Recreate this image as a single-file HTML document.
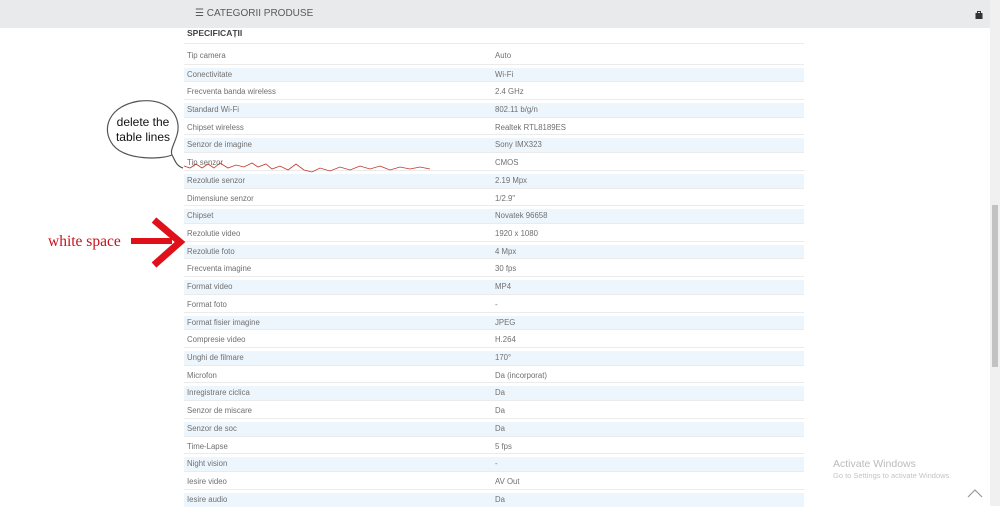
<!DOCTYPE html>
<html><head><meta charset="utf-8"><style>
*{margin:0;padding:0;box-sizing:border-box}
body{width:1000px;height:506px;overflow:hidden;background:#fff;font-family:"Liberation Sans",sans-serif;position:relative}
.hdr{position:absolute;left:0;top:0;width:990px;height:28px;background:#e8eaeb;z-index:5}
.hdr .t{position:absolute;left:195px;top:8px;font-size:10px;color:#5a5a5a}
.sb{position:absolute;left:990px;top:0;width:10px;height:506px;background:#f0f0f0}
.thumb{position:absolute;left:992px;top:205px;width:6px;height:162px;background:#c2c2c2}
h3{position:absolute;left:187px;top:28px;font-size:8.5px;font-weight:bold;color:#444}
.row{position:absolute;left:184px;width:620px;height:18px;border-top:1px solid #ebebeb;font-size:7.8px;color:#707070}
.b{background:linear-gradient(#fff 0,#fff 3px,#eef6fd 3px)}
.k{position:absolute;left:3px;top:5px}.v{position:absolute;left:311px;top:5px}
.aw{position:absolute;left:833px;top:458px;color:#bbb;font-size:10.5px}
.aw2{position:absolute;left:833px;top:471px;color:#c4c4c4;font-size:7.5px}
</style></head><body>
<div class="hdr"><div class="t">&#9776; CATEGORII PRODUSE</div>
<svg style="position:absolute;left:975px;top:11px" width="8" height="8"><rect x="0.5" y="2" width="7" height="6" fill="#333"/><rect x="2.5" y="0.5" width="3" height="2.5" fill="none" stroke="#333"/></svg></div>
<div class="sb"></div><div class="thumb"></div>
<h3>SPECIFICAȚII</h3>
<div class="row" style="top:42.5px;height:21px"><span class="k" style="top:7px">Tip camera</span><span class="v" style="top:7px">Auto</span></div>
<div class="row b" style="top:63.5px"><span class="k">Conectivitate</span><span class="v">Wi-Fi</span></div>
<div class="row" style="top:81.2px"><span class="k">Frecventa banda wireless</span><span class="v">2.4 GHz</span></div>
<div class="row b" style="top:98.9px"><span class="k">Standard Wi-Fi</span><span class="v">802.11 b/g/n</span></div>
<div class="row" style="top:116.6px"><span class="k">Chipset wireless</span><span class="v">Realtek RTL8189ES</span></div>
<div class="row b" style="top:134.4px"><span class="k">Senzor de imagine</span><span class="v">Sony IMX323</span></div>
<div class="row" style="top:152.1px"><span class="k">Tip senzor</span><span class="v">CMOS</span></div>
<div class="row b" style="top:169.8px"><span class="k">Rezolutie senzor</span><span class="v">2.19 Mpx</span></div>
<div class="row" style="top:187.5px"><span class="k">Dimensiune senzor</span><span class="v">1/2.9"</span></div>
<div class="row b" style="top:205.2px"><span class="k">Chipset</span><span class="v">Novatek 96658</span></div>
<div class="row" style="top:222.9px"><span class="k">Rezolutie video</span><span class="v">1920 x 1080</span></div>
<div class="row b" style="top:240.7px"><span class="k">Rezolutie foto</span><span class="v">4 Mpx</span></div>
<div class="row" style="top:258.4px"><span class="k">Frecventa imagine</span><span class="v">30 fps</span></div>
<div class="row b" style="top:276.1px"><span class="k">Format video</span><span class="v">MP4</span></div>
<div class="row" style="top:293.8px"><span class="k">Format foto</span><span class="v">-</span></div>
<div class="row b" style="top:311.5px"><span class="k">Format fisier imagine</span><span class="v">JPEG</span></div>
<div class="row" style="top:329.2px"><span class="k">Compresie video</span><span class="v">H.264</span></div>
<div class="row b" style="top:347px"><span class="k">Unghi de filmare</span><span class="v">170°</span></div>
<div class="row" style="top:364.7px"><span class="k">Microfon</span><span class="v">Da (incorporat)</span></div>
<div class="row b" style="top:382.4px"><span class="k">Inregistrare ciclica</span><span class="v">Da</span></div>
<div class="row" style="top:400.1px"><span class="k">Senzor de miscare</span><span class="v">Da</span></div>
<div class="row b" style="top:417.8px"><span class="k">Senzor de soc</span><span class="v">Da</span></div>
<div class="row" style="top:435.5px"><span class="k">Time-Lapse</span><span class="v">5 fps</span></div>
<div class="row b" style="top:453.3px"><span class="k">Night vision</span><span class="v">-</span></div>
<div class="row" style="top:471px"><span class="k">Iesire video</span><span class="v">AV Out</span></div>
<div class="row b" style="top:488.7px"><span class="k">Iesire audio</span><span class="v">Da</span></div>
<svg style="position:absolute;left:0;top:0" width="1000" height="506">
<path d="M183,168 C176,166 175,160 172,155 C160,160 125,160 113,145 C100,128 110,105 140,101 C170,98 182,118 177,135 C174,145 170,150 172,155" fill="#fff" stroke="#555" stroke-width="1.2"/>
<text x="143" y="126" font-family="Liberation Sans,sans-serif" font-size="12" text-anchor="middle" fill="#111">delete the</text>
<text x="143" y="141" font-family="Liberation Sans,sans-serif" font-size="12" text-anchor="middle" fill="#111">table lines</text>
<polyline points="184,166 190,168 196,164 202,168 208,164 214,168 220,163 228,168 236,165 244,167 252,163 258,167 266,164 272,169 280,166 288,170 296,164 304,170 312,172 320,168 330,171 340,167 350,170 360,166 370,169 380,166 390,170 400,167 410,169 420,167 430,169" fill="none" stroke="#c0392b" stroke-width="0.8"/>
<text x="48" y="246" font-family="Liberation Serif,serif" font-size="15.5" fill="#c8101a">white space</text>
<path d="M131,241 L172,241" stroke="#e0101a" stroke-width="6"/>
<path d="M154,220 L180,242 L154,265" fill="none" stroke="#e0101a" stroke-width="7"/>
<path d="M968,497 L975,490 L982,497" fill="none" stroke="#999" stroke-width="1.2"/>
</svg>
<div class="aw">Activate Windows</div>
<div class="aw2">Go to Settings to activate Windows.</div>
</body></html>
